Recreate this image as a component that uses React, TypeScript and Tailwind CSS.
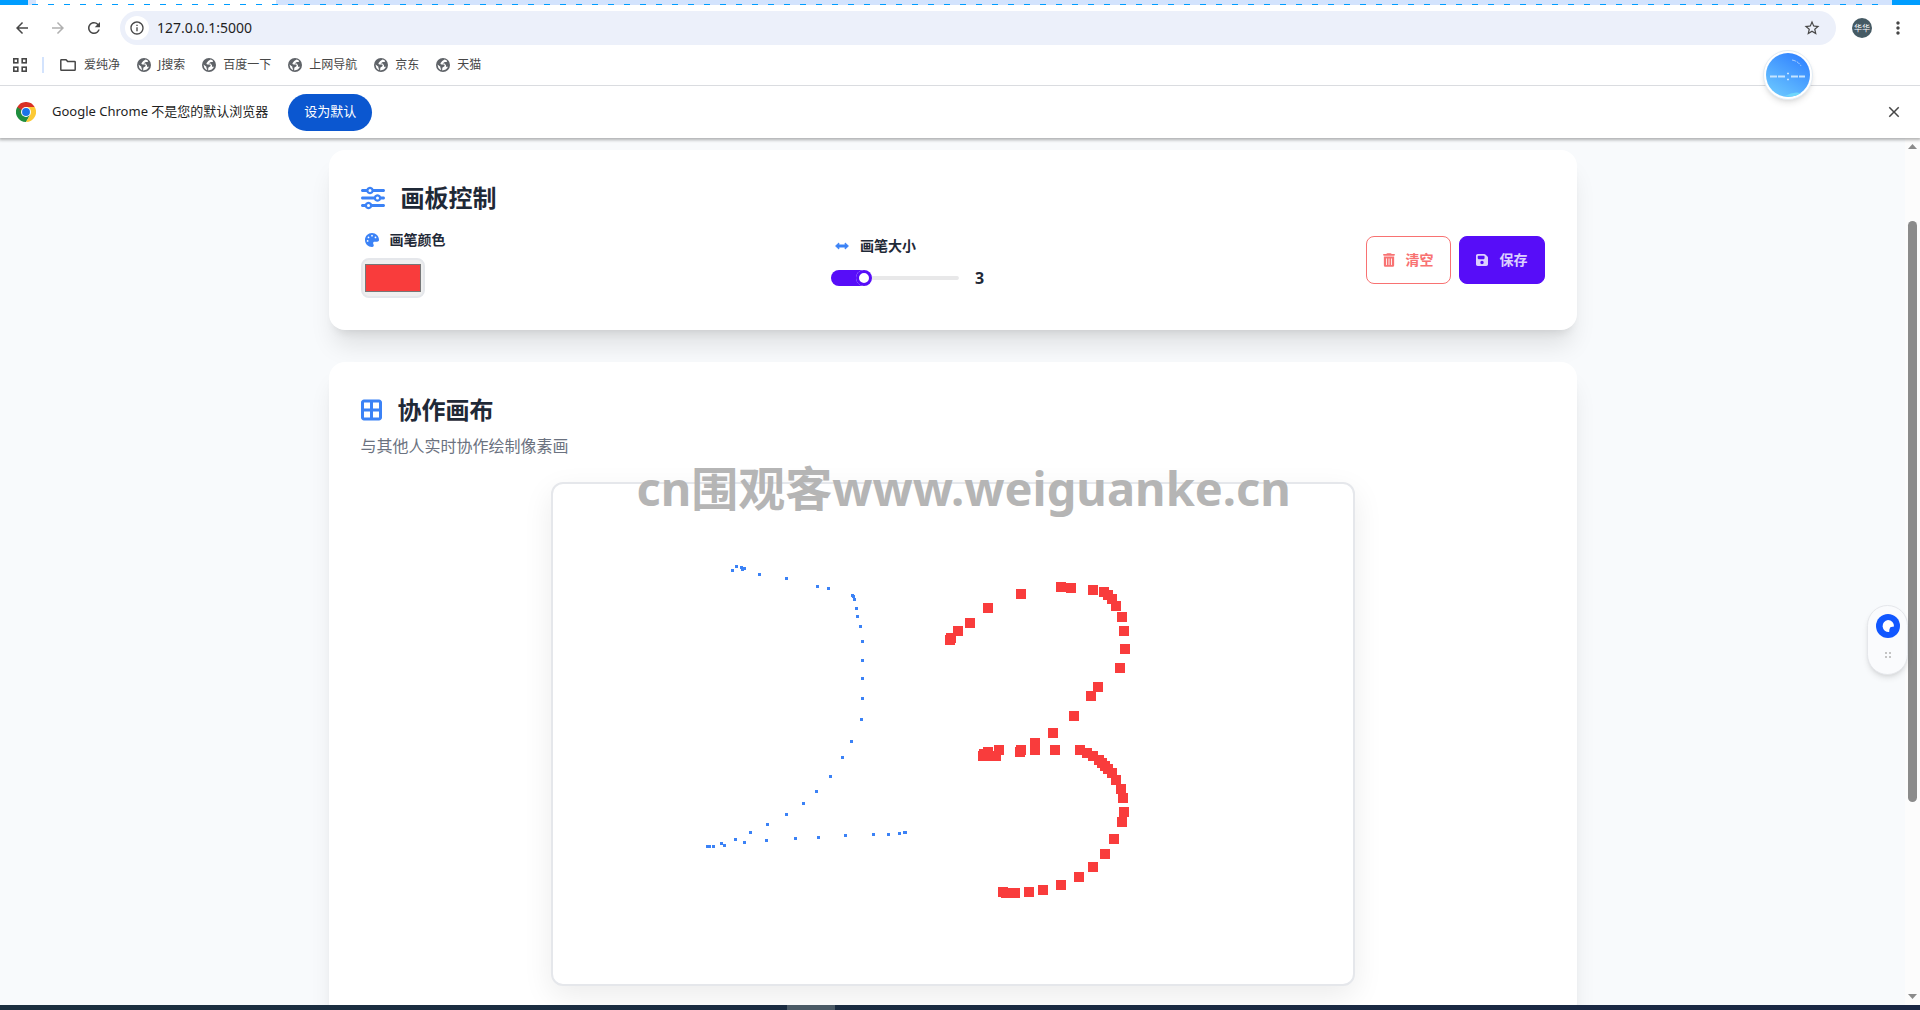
import { useState } from "react";
import { FaBorderAll, FaFloppyDisk, FaPalette, FaSliders, FaTrashCan } from "react-icons/fa6";
import {
  MdArrowBack,
  MdArrowForward,
  MdClose,
  MdInfoOutline,
  MdMoreVert,
  MdRefresh,
  MdStarBorder,
} from "react-icons/md";

const bookmarks = ["J搜索", "百度一下", "上网导航", "京东", "天猫"];

const bluePixels = [
  [178, 85], [182, 81], [187, 82], [188, 84], [190, 83], [205, 89], [232, 93], [263, 101],
  [274, 103], [298, 110], [299, 111], [300, 114], [302, 123], [303, 131], [306, 141], [308, 156],
  [308, 175], [308, 193], [308, 213], [307, 234], [297, 256], [288, 272], [276, 291], [262, 306],
  [249, 318], [232, 329], [213, 339], [196, 347], [181, 354], [167, 358], [170, 360], [159, 361],
  [153, 361], [155, 361], [190, 357], [212, 355], [241, 353], [264, 352], [291, 350], [319, 349],
  [334, 349], [345, 348], [350, 347], [351, 347],
];

const redPixels = [
  [392, 151], [393, 149], [400, 142], [412, 134], [430, 119], [463, 105], [503, 98], [513, 99],
  [535, 101], [546, 103], [550, 106], [554, 110], [558, 117], [564, 128], [566, 142], [567, 160],
  [562, 179], [540, 198], [533, 207], [516, 227], [495, 244], [477, 254], [477, 261], [497, 261],
  [463, 261], [462, 263], [441, 261], [430, 263], [426, 265], [425, 267], [434, 267], [438, 267],
  [522, 261], [529, 264], [535, 267], [541, 271], [544, 274], [547, 277], [550, 280], [554, 284],
  [558, 291], [563, 300], [565, 309], [566, 323], [564, 333], [556, 350], [547, 365], [535, 378],
  [521, 388], [503, 396], [485, 401], [471, 403], [457, 404], [448, 404], [445, 403],
];

function GlobeIcon() {
  return (
    <svg className="size-3.5" viewBox="0 0 14 14" aria-hidden="true">
      <circle cx="7" cy="7" r="7" fill="#5f6368" />
      <path
        d="M8.6 1.5Q6 2.6 4.4 5.2q0 1.2 1.4 1.3h2q.9.1.8 1.2-.2 1-1.4 1.3-1 .3-1 1.7v1.8q4.2-.3 5.8-3.7H10V7.2L8.6 5.6H6.5L8.8 4h1.8l.6-.9Q10 1.9 8.6 1.5ZM1.5 6.5l2.9 2.3v1.4l1 .9-1 .9Q1.7 10.2 1.5 6.5Z"
        fill="#fff"
      />
    </svg>
  );
}

function ChromeLogo() {
  return (
    <svg className="size-5" viewBox="0 0 48 48" aria-hidden="true">
      <path d="M24 24 3.2 12A24 24 0 0 1 44.8 12H24Z" fill="#d93025" />
      <path d="M24 24 3.2 12A24 24 0 0 0 24 48L34.4 30Z" fill="#1e8e3e" />
      <path d="M24 12h20.8A24 24 0 0 1 24 48l10.4-18Z" fill="#fcc934" />
      <path d="M3.2 12 13.6 30 24 24V12Z" fill="#d93025" />
      <path d="M3.2 12 13.6 30l6-6Z" fill="#1e8e3e" />
      <circle cx="24" cy="24" r="12" fill="#fff" />
      <circle cx="24" cy="24" r="9.5" fill="#1a73e8" />
    </svg>
  );
}

function ArrowsIcon() {
  return (
    <svg className="size-3.5" viewBox="0 0 14 14" fill="#3b82f6" stroke="#3b82f6" strokeLinejoin="round" aria-hidden="true">
      <path d="M.6 7 3.8 4v2h6.4V4l3.200 3-3.200 3V8H3.800v2Z" />
    </svg>
  );
}

function BrowserHeader() {
  return (
    <header className="relative z-10 bg-white font-['Noto_Sans','Noto_Sans_CJK_SC',sans-serif] text-[#1f1f1f] shadow-[0_1px_3px_1px_rgba(0,0,0,0.3)]">
      <div className="relative flex h-[5px] bg-[#d3e3fd]">
        <div className="w-7 bg-[#009dff]" />
        <div className="ml-2 w-60 bg-white" />
        <div className="ml-auto w-7 bg-[#009dff]" />
        <div className="absolute inset-x-8 top-1 h-px bg-[repeating-linear-gradient(90deg,#009dff_0px,#009dff_6px,transparent_6px,transparent_16px)]" />
      </div>

      <div className="flex items-center pt-1.5 pr-3 pl-[13px] text-[#474747]">
        <div className="flex gap-[18px]">
          <button type="button" aria-label="后退">
            <MdArrowBack className="size-[18px]" />
          </button>
          <button type="button" aria-label="前进" className="text-[#b0b0b0]">
            <MdArrowForward className="size-[18px]" />
          </button>
          <button type="button" aria-label="重新加载">
            <MdRefresh className="size-[18px]" />
          </button>
        </div>
        <div className="ml-[17px] flex h-[34px] flex-1 items-center rounded-full bg-[#ecf0fa] pr-[15px] pl-[5px]">
          <button
            type="button"
            aria-label="查看网站信息"
            className="grid size-6 place-items-center rounded-full bg-white"
          >
            <MdInfoOutline className="size-4" />
          </button>
          <input
            aria-label="地址"
            defaultValue="127.0.0.1:5000"
            className="ml-2 flex-1 bg-transparent text-sm text-[#1f1f1f] outline-none"
          />
          <button type="button" aria-label="为此页添加书签">
            <MdStarBorder className="size-[18px]" />
          </button>
        </div>
        <button
          type="button"
          className="ml-4 grid size-5 place-items-center rounded-full bg-[#455a64] text-[8px] leading-none text-white"
        >
          华华
        </button>
        <button type="button" aria-label="更多" className="ml-4">
          <MdMoreVert className="size-5" />
        </button>
      </div>

      <nav className="flex h-[41px] items-center border-b border-[#dadce0] pl-[13px] text-xs text-[#474747]">
        <button type="button" aria-label="应用">
          <svg className="size-3.5" viewBox="0 0 14 14" fill="none" stroke="#474747" strokeWidth="1.6">
            <rect x="0.8" y="0.8" width="4" height="4" />
            <rect x="9.2" y="0.8" width="4" height="4" />
            <rect x="0.8" y="9.2" width="4" height="4" />
            <rect x="9.2" y="9.2" width="4" height="4" />
          </svg>
        </button>
        <span className="ml-[15px] h-4 w-0.5 bg-[#d3e3fd]" />
        <div className="ml-4 flex items-center gap-[17px]">
          <a href="#folder" className="flex items-center gap-2">
            <svg className="h-3 w-4" viewBox="0 0 16 12" fill="none" stroke="#474747" strokeWidth="1.5">
              <path d="M.8 10.4V1.4q0-.6.6-.6H6l1.6 1.6h7q.6 0 .6.6v7.4q0 .8-.6.8H1.4q-.6 0-.6-.8Z" />
            </svg>
            爱纯净
          </a>
          {bookmarks.map((name) => (
            <a key={name} href="#bookmark" className="flex items-center gap-[7px]">
              <GlobeIcon />
              {name}
            </a>
          ))}
        </div>
      </nav>

      <div className="flex h-[52px] items-center pr-[17px] pl-4 text-[13px]">
        <ChromeLogo />
        <span className="ml-4">Google Chrome 不是您的默认浏览器</span>
        <button type="button" className="ml-5 h-[37px] rounded-full bg-[#0b57d0] px-4 text-white">
          设为默认
        </button>
        <button type="button" aria-label="关闭" className="ml-auto text-[#474747]">
          <MdClose className="size-[18px]" />
        </button>
      </div>

      {/* desktop network-speed ball floating over the browser */}
      <div className="absolute top-[50px] right-[107px] rounded-full border border-[#e3ecf4] bg-white p-0.5 shadow-md">
        <svg className="size-11" viewBox="0 0 44 44" aria-hidden="true">
          <defs>
            <linearGradient id="ball" x1="0.2" y1="1" x2="0.8" y2="0">
              <stop offset="0" stopColor="#6cc8ff" />
              <stop offset="1" stopColor="#2f80ff" />
            </linearGradient>
          </defs>
          <circle cx="22" cy="22" r="22" fill="url(#ball)" />
          <path d="M19 43q8-5 16-3-7 5-16 3Z" fill="#6fd6fb" />
          <path d="M4 23.5h7m1 0h7m6 0h7m1 0h6" stroke="#c5e4ff" strokeWidth="2" />
          <path d="M21 20.5h2m-2 6h2" stroke="#c5e4ff" strokeWidth="1.5" />
          <path d="M26 7q6 1 9 6" stroke="#a9cfff" strokeDasharray="4 1" fill="none" />
        </svg>
      </div>
    </header>
  );
}

function ControlPanel() {
  const [color, setColor] = useState("#f93c3c");
  const [size, setSize] = useState(3);

  return (
    <section className="rounded-2xl bg-white p-8 shadow-[0_20px_25px_-5px_rgba(0,0,0,0.1),0_8px_10px_-6px_rgba(0,0,0,0.1)]">
      <h2 className="flex items-center gap-4 text-2xl font-bold">
        <FaSliders className="text-[#3b82f6]" />
        画板控制
      </h2>
      <div className="mt-2 flex items-center justify-between">
        <div>
          <label htmlFor="color" className="flex items-center gap-[11px] px-1 py-2 text-sm font-bold">
            <FaPalette className="text-[#3b82f6]" />
            画笔颜色
          </label>
          <input
            id="color"
            type="color"
            value={color}
            onChange={(e) => setColor(e.target.value)}
            className="block h-10 w-16 rounded-lg border-2 border-[#e5e7eb] bg-[#efefef]"
          />
        </div>

        <div>
          <label htmlFor="size" className="flex items-center gap-[11px] px-1 py-2 text-sm font-bold">
            <ArrowsIcon />
            画笔大小
          </label>
          <div className="flex h-7 items-center gap-4">
            <input
              id="size"
              type="range"
              min={1}
              max={10}
              value={size}
              onChange={(e) => setSize(Number(e.target.value))}
              className="h-4 w-32 appearance-none overflow-hidden rounded-full bg-transparent [&::-webkit-slider-runnable-track]:h-1 [&::-webkit-slider-runnable-track]:rounded-full [&::-webkit-slider-runnable-track]:bg-[#e8e8e9] [&::-webkit-slider-thumb]:-mt-1.5 [&::-webkit-slider-thumb]:size-4 [&::-webkit-slider-thumb]:appearance-none [&::-webkit-slider-thumb]:rounded-full [&::-webkit-slider-thumb]:bg-white [&::-webkit-slider-thumb]:shadow-[inset_0_0_0_3px_#570df8,-106px_0_0_96px_#570df8]"
            />
            <output htmlFor="size" className="font-bold">
              {size}
            </output>
          </div>
        </div>

        <div className="flex gap-2 text-sm font-bold">
          <button
            type="button"
            className="flex h-12 items-center gap-[11px] rounded-lg border border-[#f87272] px-4 text-[#f87272]"
          >
            <FaTrashCan className="h-3.5 w-3" />
            清空
          </button>
          <button
            type="button"
            className="flex h-12 items-center gap-3 rounded-lg border border-[#570df8] bg-[#570df8] px-4 text-[#ddd0fe]"
          >
            <FaFloppyDisk className="h-3.5 w-3" />
            保存
          </button>
        </div>
      </div>
    </section>
  );
}

function CanvasPanel() {
  return (
    <section className="rounded-2xl bg-white p-8 shadow-[0_20px_25px_-5px_rgba(0,0,0,0.1),0_8px_10px_-6px_rgba(0,0,0,0.1)]">
      <h2 className="flex items-center gap-4 text-2xl font-bold">
        <FaBorderAll className="h-6 w-[21px] text-[#3b82f6]" />
        协作画布
      </h2>
      <p className="mt-2 text-[#6b7280]">与其他人实时协作绘制像素画</p>
      <div className="mt-6 flex justify-center">
        <div className="relative rounded-xl border-2 border-[#e5e7eb] bg-white shadow-[0_10px_30px_rgba(0,0,0,0.08)]">
          <svg width="800" height="500" viewBox="0 0 800 500" shapeRendering="crispEdges" role="img" aria-label="画布">
            {bluePixels.map(([x, y]) => (
              <rect key={`${x}-${y}`} x={x} y={y} width="3" height="3" fill="#3b82f6" />
            ))}
            {redPixels.map(([x, y]) => (
              <rect key={`${x}-${y}`} x={x} y={y} width="10" height="10" fill="#f93c3c" />
            ))}
          </svg>
          <span className="pointer-events-none absolute -top-[26px] left-[84px] font-['Noto_Sans','Noto_Sans_CJK_SC',sans-serif] text-[47px] leading-[60px] font-bold whitespace-nowrap text-[#b5b5b5]">
            cn围观客www.weiguanke.cn
          </span>
        </div>
      </div>
    </section>
  );
}

function Scrollbar() {
  return (
    <div className="flex w-[15px] shrink-0 flex-col items-center justify-between bg-[#fcfcfc] py-1.5" aria-hidden="true">
      <svg width="9" height="5" viewBox="0 0 9 5">
        <path d="M0 5 4.5 0 9 5Z" fill="#8b8b8b" />
      </svg>
      <div className="mt-[72px] mb-auto h-[68%] w-[9px] rounded-full bg-[#8b8b8b]" />
      <svg width="9" height="5" viewBox="0 0 9 5">
        <path d="M0 0 4.5 5 9 0Z" fill="#8b8b8b" />
      </svg>
    </div>
  );
}

export default function App() {
  return (
    <div className="flex h-screen flex-col overflow-hidden bg-[#f8fafc]">
      <BrowserHeader />
      <div className="relative flex min-h-0 flex-1">
        <main className="min-w-0 flex-1 overflow-hidden font-['Noto_Sans','Noto_Sans_CJK_SC',sans-serif] text-[#1f2937]">
          <div className="mx-auto flex max-w-7xl flex-col gap-8 px-4 py-3">
            <ControlPanel />
            <CanvasPanel />
          </div>
        </main>
        <div className="absolute top-[467px] right-3 flex h-[70px] w-[41px] flex-col items-center gap-3.5 rounded-full border border-[#e5e7eb] bg-[#fafbfd] pt-2 shadow-md">
          <button type="button" aria-label="助手">
            <svg className="size-6" viewBox="0 0 24 24">
              <circle cx="12" cy="12" r="12" fill="#1157ff" />
              <path d="M12 6a6 6 0 0 1 6 6.5q-3.5 0-4 1.5-.8 1-.8 4A6 6 0 1 1 12 6Z" fill="#fff" />
            </svg>
          </button>
          <svg width="6" height="6" viewBox="0 0 6 6" fill="#c4c4c4" aria-hidden="true">
            <path d="M0 0h2v2H0ZM4 0h2v2H4ZM0 4h2v2H0ZM4 4h2v2H4Z" />
          </svg>
        </div>
        <Scrollbar />
      </div>
      <footer className="flex h-[5px] shrink-0 bg-linear-to-r from-[#1b2f3f] to-[#1a2744]">
        <div className="ml-[41%] w-12 bg-[#4b5a66]" />
      </footer>
    </div>
  );
}
